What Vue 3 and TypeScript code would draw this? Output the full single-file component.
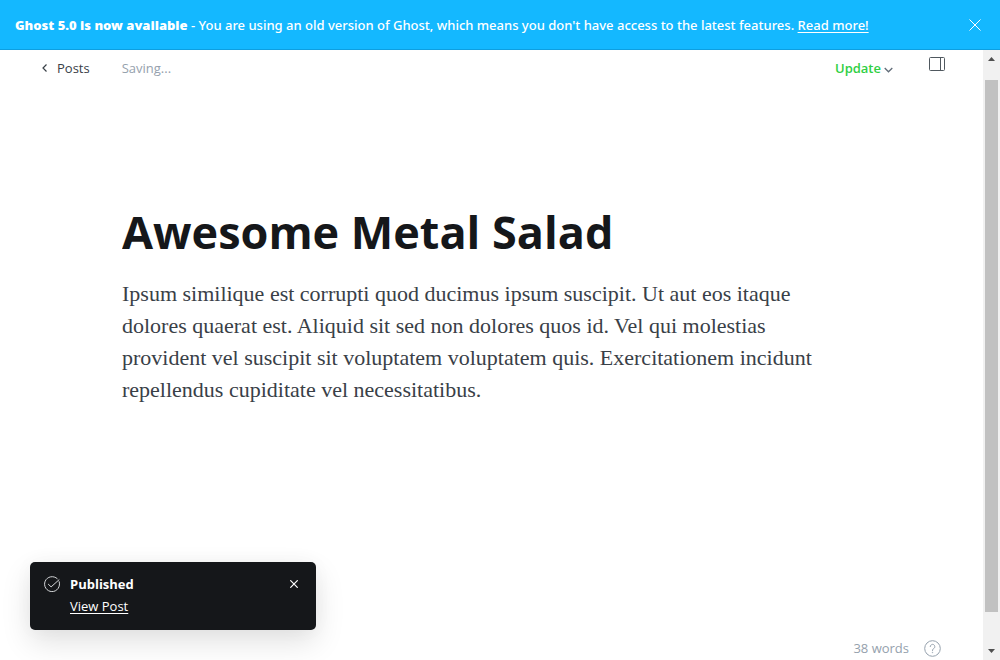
<script setup lang="ts">
import { ref } from 'vue'

const title = ref('Awesome Metal Salad')
const body =
  'Ipsum similique est corrupti quod ducimus ipsum suscipit. Ut aut eos itaque dolores quaerat est. Aliquid sit sed non dolores quos id. Vel qui molestias provident vel suscipit sit voluptatem voluptatem quis. Exercitationem incidunt repellendus cupiditate vel necessitatibus.'
const wordCount = ref(38)
const showBanner = ref(true)
const showToast = ref(true)
</script>

<template>
  <div class="app">
    <aside v-if="showBanner" class="banner">
      <p class="banner-text">
        <strong>Ghost 5.0 is now available</strong> - You are using an old version of Ghost, which means you don't have access to the latest features.
        <a href="#">Read more!</a>
      </p>
      <button type="button" class="banner-close" aria-label="Dismiss" @click="showBanner = false">
        <svg width="12" height="12" viewBox="0 0 12 12" fill="none" stroke="currentColor">
          <path d="M.5.5l11 11M11.5.5l-11 11" />
        </svg>
      </button>
    </aside>

    <div class="workspace">
      <main class="editor">
        <header class="toolbar">
          <a href="#" class="back">
            <svg width="5" height="8" viewBox="0 0 5 8" fill="none" stroke="currentColor" stroke-width="1.2">
              <path d="M4.5.5L1 4l3.500 3.500" />
            </svg>
            Posts
          </a>
          <span class="status">Saving...</span>
          <button type="button" class="update">
            Update
            <svg width="9" height="9" viewBox="0 0 9 9" fill="none" stroke="#626d79" stroke-width="1.300">
              <path d="M.7 4l3.800 3.800L8.300 4" />
            </svg>
          </button>
          <button type="button" class="settings" aria-label="Settings">
            <svg width="16" height="14" viewBox="0 0 16 14" fill="none" stroke="currentColor">
              <rect x=".5" y=".5" width="15" height="13" rx="1" />
              <path d="M11.500.5v13" />
            </svg>
          </button>
        </header>

        <article class="post">
          <input v-model="title" class="title" type="text" aria-label="Post title" />
          <p class="body" contenteditable="true" spellcheck="false">{{ body }}</p>
        </article>

        <footer class="footer">
          <span>{{ wordCount }} words</span>
          <a href="#" class="help" aria-label="Help">
            <svg width="17" height="17" viewBox="0 0 17 17" fill="none" stroke="currentColor">
              <circle cx="8.500" cy="8.500" r="7.800" />
              <path d="M6.200 6.600a2.300 2.300 0 1 1 3.500 2c-.8.500-1.200.9-1.200 1.900" stroke-linecap="round" />
              <circle cx="8.500" cy="12.500" r=".4" fill="currentColor" stroke-width=".5" />
            </svg>
          </a>
        </footer>
      </main>

      <div class="scrollbar" aria-hidden="true">
        <svg class="arrow" width="7" height="4" viewBox="0 0 7 4"><path d="M0 4L3.500 0 7 4z" /></svg>
        <div class="track"><div class="thumb"></div></div>
        <svg class="arrow" width="7" height="4" viewBox="0 0 7 4"><path d="M0 0l3.500 4L7 0z" /></svg>
      </div>
    </div>

    <section v-if="showToast" class="toast" role="status">
      <svg class="toast-icon" width="16" height="16" viewBox="0 0 16 16" fill="none" stroke="currentColor" stroke-linecap="round" stroke-linejoin="round">
        <path d="M15.200 5.700A7.500 7.500 0 1 1 13.200 2.600" />
        <path d="M4.400 8.300l2.700 2.600 7.900-7.100" />
      </svg>
      <div class="toast-content">
        <strong>Published</strong>
        <a href="#">View Post</a>
      </div>
      <button type="button" class="toast-close" aria-label="Close" @click="showToast = false">
        <svg width="8" height="8" viewBox="0 0 8 8" fill="none" stroke="currentColor" stroke-width="1.200">
          <path d="M.3.3l7.400 7.400M7.700.3L.3 7.700" />
        </svg>
      </button>
    </section>
  </div>
</template>

<style>
body {
  margin: 0;
}
</style>

<style scoped>
.app {
  position: relative;
  display: flex;
  flex-direction: column;
  height: 100vh;
  overflow: hidden;
  background: #fff;
  color: #394047;
  font-family: "Open Sans", "Noto Sans", sans-serif;
  font-size: 13px;
  line-height: 20px;
}

.app *,
.app {
  box-sizing: border-box;
}

button {
  padding: 0;
  border: 0;
  background: none;
  color: inherit;
  font: inherit;
  cursor: pointer;
}

svg {
  display: block;
  flex: none;
}

.banner {
  display: flex;
  align-items: center;
  justify-content: space-between;
  flex: none;
  height: 50px;
  padding: 0 19px 0 15px;
  border-bottom: 1px solid #0e9fe0;
  background: #14b8ff;
  color: #fff;
}

.banner-text {
  margin: 0;
  font-family: "Noto Sans", "Open Sans", sans-serif;
  font-weight: 500;
}

.banner-text strong {
  font-weight: 900;
}

.banner-text a,
.toast a {
  color: inherit;
  text-decoration: underline;
  text-underline-offset: 2px;
}

.workspace {
  display: flex;
  flex: 1;
  min-height: 0;
}

.editor {
  display: flex;
  flex: 1;
  flex-direction: column;
  min-width: 0;
}

.toolbar {
  display: flex;
  align-items: center;
  height: 36px;
  padding: 0 38px 0 42px;
}

.back {
  display: flex;
  align-items: center;
  gap: 10px;
  margin-right: 32px;
  color: #394047;
  font-weight: 500;
  text-decoration: none;
}

.status {
  color: #95a1ad;
}

.update {
  display: flex;
  align-items: center;
  gap: 3px;
  margin-left: auto;
  color: #30cf43;
  font-weight: 600;
}

.settings {
  align-self: flex-start;
  margin: 7px 0 0 36px;
  color: #50585f;
}

.post {
  flex: 1;
  padding: 110px 122px 0;
}

.title {
  display: block;
  width: 100%;
  height: 72px;
  padding: 0;
  border: 0;
  outline: 0;
  background: none;
  color: #15171a;
  font: 700 45px/72px "Open Sans", "Noto Sans", sans-serif;
}

.body {
  max-width: 710px;
  margin: 10px 0 0;
  outline: 0;
  font-family: "Liberation Serif", serif;
  font-size: 22px;
  line-height: 32px;
}

.footer {
  display: flex;
  align-items: center;
  justify-content: flex-end;
  gap: 15px;
  height: 24px;
  padding-right: 42px;
  color: #95a1ad;
}

.help {
  color: inherit;
}

.scrollbar {
  display: flex;
  flex: none;
  flex-direction: column;
  align-items: center;
  justify-content: space-between;
  width: 17px;
  padding: 7px 0;
  background: #f1f1f1;
}

.arrow {
  fill: #505050;
}

.track {
  flex: 1;
  width: 13px;
  margin: 19px 0 37px;
}

.thumb {
  height: 100%;
  background: #c1c1c1;
}

.toast {
  position: absolute;
  bottom: 30px;
  left: 30px;
  display: flex;
  align-items: flex-start;
  width: 286px;
  padding: 12px 18px 14px 14px;
  border-radius: 5px;
  background: #15171a;
  box-shadow: 0 12px 30px rgba(0, 0, 0, 0.12), 0 0 20px rgba(0, 0, 0, 0.03);
  color: #fff;
}

.toast-icon {
  margin: 2px 10px 0 0;
  color: #d5d7d9;
}

.toast-content {
  display: flex;
  flex: 1;
  flex-direction: column;
  align-items: flex-start;
  gap: 2px;
}

.toast-close {
  margin-top: 6px;
}
</style>
